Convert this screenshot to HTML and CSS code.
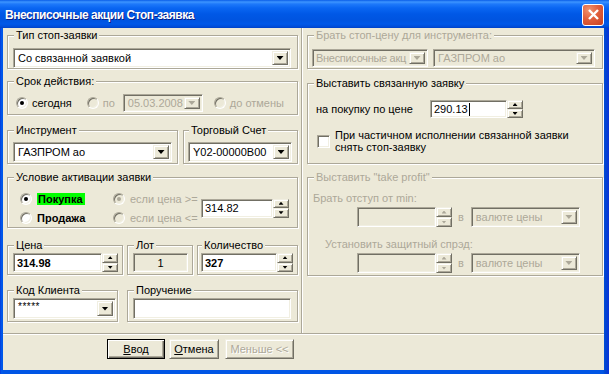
FILE: index.html
```html
<!DOCTYPE html>
<html lang="ru">
<head>
	<meta charset="UTF-8">
	<title>Внесписочные акции Стоп-заявка</title>
	<link rel="stylesheet" href="styles.css">
</head>
<body>
<div class="window">
	<div class="titlebar">
		<span class="title">Внесписочные акции Стоп-заявка</span>
		<span class="close"><svg width="13" height="13" viewBox="0 0 13 13"><path d="M2 2L11 11M11 2L2 11" stroke="#fff" stroke-width="2.4"/></svg></span>
	</div>
	<div class="client">
		<div class="panels">
			<div class="panel left">
				<fieldset class="group g-type">
					<legend>Тип стоп-заявки</legend>
					<div class="combo w278 h20"><span class="val">Со связанной заявкой</span><span class="drop"><i class="arrow"></i></span></div>
				</fieldset>

				<fieldset class="group g-term">
					<legend>Срок действия:</legend>
					<div class="line term">
						<span class="radio on r-today"></span><span class="lbl">сегодня</span>
						<span class="radio dis r-till"></span><span class="lbl dis">по</span>
						<div class="combo dis date"><span class="val">05.03.2008</span><span class="drop"><i class="arrow"></i></span></div>
						<span class="radio dis r-cancel"></span><span class="lbl dis">до отмены</span>
					</div>
				</fieldset>

				<div class="pair g-instr">
					<fieldset class="group w171">
						<legend>Инструмент</legend>
						<div class="combo w159 h20"><span class="val">ГАЗПРОМ ао</span><span class="drop"><i class="arrow"></i></span></div>
					</fieldset>
					<fieldset class="group w115 acc">
						<legend>Торговый Счет</legend>
						<div class="combo w104 h20"><span class="val">Y02-00000B00</span><span class="drop"><i class="arrow"></i></span></div>
					</fieldset>
				</div>

				<fieldset class="group g-cond">
					<legend>Условие активации заявки</legend>
					<div class="line">
						<div class="col side">
							<div class="opt"><span class="radio on"></span><b class="buy">Покупка</b></div>
							<div class="opt"><span class="radio"></span><b>Продажа</b></div>
						</div>
						<div class="col cmp">
							<div class="opt"><span class="radio dis on"></span><span class="lbl dis">если цена &gt;=</span></div>
							<div class="opt"><span class="radio dis"></span><span class="lbl dis">если цена &lt;=</span></div>
						</div>
						<div class="field w72 h19">314.82</div>
						<div class="spin h19"><span class="sb"><i class="up"></i></span><span class="sb"><i class="dn"></i></span></div>
					</div>
				</fieldset>

				<div class="pair g-price">
					<fieldset class="group w116">
						<legend>Цена</legend>
						<div class="line">
							<div class="field w92 h19 bold">314.98</div>
							<div class="spin h19"><span class="sb"><i class="up"></i></span><span class="sb"><i class="dn"></i></span></div>
						</div>
					</fieldset>
					<fieldset class="group w66">
						<legend>Лот</legend>
						<div class="field grey w55 h19 center">1</div>
					</fieldset>
					<fieldset class="group w101 qty">
						<legend>Количество</legend>
						<div class="line">
							<div class="field w76 h19 bold">327</div>
							<div class="spin h19"><span class="sb"><i class="up"></i></span><span class="sb"><i class="dn"></i></span></div>
						</div>
					</fieldset>
				</div>

				<div class="pair g-client">
					<fieldset class="group w111">
						<legend>Код Клиента</legend>
						<div class="combo w103 h21"><span class="val stars">*****</span><span class="drop"><i class="arrow"></i></span></div>
					</fieldset>
					<fieldset class="group w171 order">
						<legend>Поручение</legend>
						<div class="field w158 h21"></div>
					</fieldset>
				</div>
			</div>

			<div class="panel right">
				<fieldset class="group dis r-src">
					<legend>Брать стоп-цену для инструмента:</legend>
					<div class="line">
						<div class="combo dis w116 h18"><span class="val tight">Внесписочные акц</span><span class="drop"><i class="arrow"></i></span></div>
						<div class="combo dis w162 h18 gap5"><span class="val">ГАЗПРОМ ао</span><span class="drop"><i class="arrow"></i></span></div>
					</div>
				</fieldset>

				<fieldset class="group r-linked">
					<legend>Выставить связанную заявку</legend>
					<div class="line">
						<span class="lbl buyprice">на покупку по цене</span>
						<div class="field w77 h18">290.13<span class="caret"></span></div>
						<div class="spin h18"><span class="sb"><i class="up"></i></span><span class="sb"><i class="dn"></i></span></div>
					</div>
					<div class="check-row">
						<span class="check"></span>
						<span class="check-text">При частичном исполнении связанной заявки<br>снять стоп-заявку</span>
					</div>
				</fieldset>

				<fieldset class="group dis r-tp">
					<legend>Выставить "take profit"</legend>
					<div class="lbl dis tp-label">Брать отступ от min:</div>
					<div class="line tp-row">
						<div class="field dis w79 h20"></div>
						<div class="spin dis h20"><span class="sb"><i class="up"></i></span><span class="sb"><i class="dn"></i></span></div>
						<span class="lbl dis in">в</span>
						<div class="combo dis w109 h20"><span class="val">валюте цены</span><span class="drop"><i class="arrow"></i></span></div>
					</div>
					<div class="lbl dis tp-label sub">Установить защитный спрэд:</div>
					<div class="line tp-row">
						<div class="field dis w79 h20"></div>
						<div class="spin dis h20"><span class="sb"><i class="up"></i></span><span class="sb"><i class="dn"></i></span></div>
						<span class="lbl dis in">в</span>
						<div class="combo dis w109 h20"><span class="val">валюте цены</span><span class="drop"><i class="arrow"></i></span></div>
					</div>
				</fieldset>
			</div>
		</div>

		<div class="buttons">
			<span class="btn default"><u>В</u>вод</span>
			<span class="btn cancel"><u>О</u>тмена</span>
			<span class="btn disabled">Меньше &lt;&lt;</span>
		</div>
	</div>
</div>
</body>
</html>
```

FILE: styles.css
```css
* {
	box-sizing: border-box;
}
body {
	margin: 0;
	font: 11px "Liberation Sans", Arial, sans-serif;
	color: #000;
}
.window {
	width: 609px;
	height: 374px;
	display: flex;
	flex-direction: column;
	background: linear-gradient(to right, #0831D9 0, #0055E5 1px, #0058EE 2px, #0055E5 3px, #0055E5 603px, #0048D0 605px, #0831D9 609px);
}
.titlebar {
	height: 28px;
	display: flex;
	align-items: center;
	justify-content: space-between;
	padding: 0 5px 0 5px;
	background: linear-gradient(to bottom, #0A5DE8 0, #3D95FF 2px, #1E79FA 4px, #0A66F2 8px, #0058E6 14px, #0054E0 20px, #0058E8 24px, #004BD6 27px, #0040C4 28px);
}
.title {
	color: #fff;
	font-weight: bold;
	font-size: 12px;
	letter-spacing: -0.45px;
	text-shadow: 1px 1px #0A1F85;
	margin-top: 1px;
}
.close {
	width: 22px;
	height: 22px;
	display: flex;
	align-items: center;
	justify-content: center;
	border: 1px solid #fff;
	border-radius: 3px;
	background: radial-gradient(circle at 30% 25%, #F0936E 0, #E0603D 45%, #C8401F 100%);
	margin-top: 1px;
}
.client {
	flex: 1;
	margin: 0 5px 4px 3px;
	background: #ECE9D8;
	display: flex;
	flex-direction: column;
}
.panels {
	display: flex;
	height: 306px;
	border-bottom: 1px solid #ACA899;
	box-shadow: 0 1px #fff;
}
.panel.left {
	width: 299px;
	padding: 1px 3px 0 4px;
	border-right: 1px solid #ACA899;
}
.panel.right {
	flex: 1;
	padding: 1px 1px 0 4px;
	border-left: 1px solid #fff;
}

/* group boxes */
.group {
	margin: 0;
	padding: 0 4px 0 5px;
	min-width: 0;
	border: 1px solid #ACA899;
	box-shadow: inset 1px 1px #fff, 1px 1px #fff;
}
.group legend {
	padding: 0 2px;
	margin-left: 1px;
	line-height: 13px;
	background: #ECE9D8;
}
.group.dis legend,
.lbl.dis {
	color: #ACA899;
}
.w171 { width: 171px; }
.w115 { width: 115px; }
.w116 { width: 116px; }
.w66 { width: 66px; }
.w101 { width: 101px; }
.w111 { width: 111px; }

.pair {
	display: flex;
	gap: 5px;
}
.line {
	display: flex;
	align-items: center;
}

.g-type { padding-top: 6px; }
.g-term { margin-top: 6px; padding-top: 6px; padding-bottom: 2px; }
.g-instr { margin-top: 9px; }
.g-instr .group { padding-top: 5px; padding-bottom: 1px; }
.g-instr .acc { padding-left: 4px; }
.g-cond { margin-top: 7px; padding-top: 5px; }
.g-price { margin-top: 11px; gap: 4px; }
.g-price .group { padding-top: 1px; padding-bottom: 2px; }
.g-price .qty { padding-left: 3px; }
.g-client { margin-top: 9px; gap: 9px; }
.g-client .group { padding-top: 1px; padding-bottom: 2px; }

/* sunken fields */
.combo,
.field {
	display: flex;
	align-items: center;
	background: #fff;
	border: 1px solid;
	border-color: #ACA899 #fff #fff #ACA899;
	box-shadow: inset 1px 1px #716F64, inset -1px -1px #F1EFE2;
	padding: 2px;
	white-space: nowrap;
	overflow: hidden;
}
.field {
	padding: 2px 3px;
}
.combo .val {
	flex: 1;
	padding-left: 2px;
	overflow: hidden;
}
.combo .val.tight {
	padding-left: 1px;
	letter-spacing: -0.3px;
}
.combo.dis,
.field.dis,
.field.grey {
	background: #ECE9D8;
}
.combo.dis .val {
	color: #ACA899;
}
.drop {
	width: 16px;
	flex: none;
	align-self: stretch;
	display: flex;
	align-items: center;
	justify-content: center;
}
.drop,
.sb,
.btn {
	background: #ECE9D8;
	border: 1px solid;
	border-color: #F1EFE2 #716F64 #716F64 #F1EFE2;
	box-shadow: inset 1px 1px #fff, inset -1px -1px #ACA899;
}
.arrow {
	width: 7px;
	height: 4px;
	background: #000;
	clip-path: polygon(0 0, 100% 0, 50% 100%);
}
.dis .arrow {
	background: #ACA899;
}
.bold { font-weight: bold; }
.center { justify-content: center; }

.w278 { width: 278px; }
.w159 { width: 159px; }
.w104 { width: 104px; }
.w103 { width: 103px; }
.w72 { width: 72px; }
.w92 { width: 92px; }
.w55 { width: 55px; }
.w76 { width: 76px; }
.w158 { width: 158px; }
.w162 { width: 162px; }
.w77 { width: 77px; }
.w79 { width: 79px; }
.w109 { width: 109px; }
.h18 { height: 18px; }
.h19 { height: 19px; }
.h20 { height: 20px; }
.h21 { height: 21px; }

/* spinners */
.spin {
	width: 16px;
	display: flex;
	flex-direction: column;
}
.sb {
	flex: 1;
	display: flex;
	align-items: center;
	justify-content: center;
}
.up,
.dn {
	width: 5px;
	height: 3px;
	background: #000;
}
.up { clip-path: polygon(50% 0, 100% 100%, 0 100%); }
.dn { clip-path: polygon(0 0, 100% 0, 50% 100%); }
.spin.dis .up,
.spin.dis .dn {
	background: #ACA899;
}

/* radios and checks */
.radio,
.check {
	flex: none;
	display: inline-flex;
	align-items: center;
	justify-content: center;
	width: 12px;
	height: 12px;
	border-radius: 50%;
	background: #fff;
	border: 1px solid;
	border-color: #ACA899 #fff #fff #ACA899;
	box-shadow: inset 1px 1px #716F64, inset -1px -1px #F1EFE2;
}
.radio.on::after {
	content: "";
	width: 4px;
	height: 4px;
	border-radius: 50%;
	background: #000;
}
.radio.dis {
	background: #ECE9D8;
}
.radio.dis.on::after {
	background: #ACA899;
}
.check {
	width: 13px;
	height: 13px;
	border-radius: 0;
}

.term {
	height: 18px;
}
.r-today { margin-left: 3px; }
.term .lbl { margin-left: 4px; }
.r-till { margin-left: 15px; }
.date {
	width: 80px;
	height: 18px;
	margin-left: 8px;
}
.r-cancel { margin-left: 11px; }

.col {
	display: flex;
	flex-direction: column;
}
.opt {
	height: 19px;
	display: flex;
	align-items: center;
}
.side { width: 100px; padding-left: 7px; }
.side b { margin-left: 5px; }
.buy {
	background: #00FF00;
	padding: 0 2px 0 1px;
}
.cmp { width: 88px; }
.cmp .lbl { margin-left: 5px; }

.stars {
	align-self: flex-start;
	font-size: 10px;
	letter-spacing: 0.5px;
}

/* right panel */
.r-src {
	padding-top: 7px;
	padding-bottom: 1px;
	padding-left: 4px;
}
.r-src legend { margin-left: 2px; }
.gap5 { margin-left: 5px; }
.r-linked {
	margin-top: 8px;
	padding-top: 10px;
	padding-bottom: 10px;
}
.buyprice {
	width: 117px;
	padding-left: 3px;
}
.caret {
	display: inline-block;
	width: 1px;
	height: 13px;
	background: #000;
	margin-left: 1px;
}
.check-row {
	margin-top: 11px;
	display: flex;
	align-items: center;
}
.check {
	margin-left: 4px;
}
.check-text {
	margin-left: 5px;
	line-height: 12px;
}
.r-tp {
	margin-top: 7px;
	padding-top: 8px;
	padding-bottom: 2px;
}
.tp-label {
	line-height: 13px;
}
.tp-label.sub {
	margin-top: 11px;
	padding-left: 12px;
}
.tp-row {
	margin-top: 2px;
	padding-left: 44px;
}
.in {
	margin: 0 7px 0 6px;
}

/* buttons */
.buttons {
	display: flex;
	padding: 5px 0 0 104px;
}
.btn {
	height: 20px;
	display: flex;
	align-items: center;
	justify-content: center;
}
.btn.default {
	width: 58px;
	border: 1px solid #000;
	box-shadow: inset 1px 1px #fff, inset -1px -1px #716F64, inset -2px -2px #ACA899;
}
.btn.cancel {
	width: 50px;
	margin-left: 4px;
}
.btn.disabled {
	width: 69px;
	margin-left: 6px;
	color: #ACA899;
	text-shadow: 1px 1px #fff;
}
```
